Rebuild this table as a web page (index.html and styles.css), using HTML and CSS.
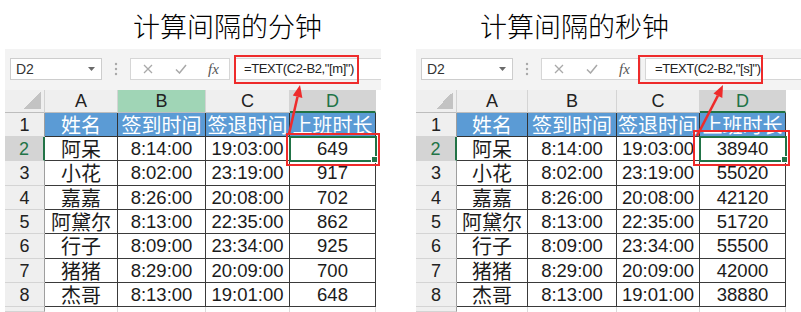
FILE: index.html
```html
<!DOCTYPE html>
<html lang="zh-CN">
<head>
<meta charset="utf-8">
<title>计算间隔</title>
<link rel="stylesheet" href="styles.css">
</head>
<body>
<div class="page">
  <section class="panel panel-m">
    <h1 class="title">计算间隔的分钟</h1>
    <div class="bar">
      <div class="namebox"><span>D2</span><svg class="caret" viewBox="0 0 7 4"><path d="M0 0H7L3.5 4Z"/></svg></div>
      <svg class="dots" viewBox="0 0 6 22"><circle cx="3" cy="6" r="1.2"/><circle cx="3" cy="11" r="1.2"/><circle cx="3" cy="16" r="1.2"/></svg>
      <div class="tools">
        <svg class="ic-x" viewBox="0 0 10 10"><path d="M1 1L9 9M9 1L1 9"/></svg>
        <svg class="ic-ok" viewBox="0 0 12 10"><path d="M1 5.5L4.5 9L11 1"/></svg>
        <span class="fx">fx</span>
      </div>
      <div class="formula">=TEXT(C2-B2,"[m]")</div>
    </div>
    <div class="grid grid-m">
      <div class="corner"></div><div class="ch">A</div><div class="ch hov">B</div><div class="ch">C</div><div class="ch on">D</div>
      <div class="rh">1</div><div class="hd">姓名</div><div class="hd">签到时间</div><div class="hd">签退时间</div><div class="hd">上班时长</div>
      <div class="rh on">2</div><div class="c n">阿呆</div><div class="c">8:14:00</div><div class="c">19:03:00</div><div class="c sel">649</div>
      <div class="rh">3</div><div class="c n">小花</div><div class="c">8:02:00</div><div class="c">23:19:00</div><div class="c">917</div>
      <div class="rh">4</div><div class="c n">嘉嘉</div><div class="c">8:26:00</div><div class="c">20:08:00</div><div class="c">702</div>
      <div class="rh">5</div><div class="c n">阿黛尔</div><div class="c">8:13:00</div><div class="c">22:35:00</div><div class="c">862</div>
      <div class="rh">6</div><div class="c n">行子</div><div class="c">8:09:00</div><div class="c">23:34:00</div><div class="c">925</div>
      <div class="rh">7</div><div class="c n">猪猪</div><div class="c">8:29:00</div><div class="c">20:09:00</div><div class="c">700</div>
      <div class="rh">8</div><div class="c n">杰哥</div><div class="c">8:13:00</div><div class="c">19:01:00</div><div class="c">648</div>
      <div class="rh"></div><div class="e"></div><div class="e"></div><div class="e"></div><div class="e"></div>
    </div>
    <svg class="marks" viewBox="0 0 376 312">
      <rect x="230" y="56" width="123" height="27"/>
      <rect x="282" y="134" width="92" height="31"/>
      <line x1="284" y1="134" x2="292.5" y2="96.7"/>
      <polygon points="295,85 297.4,98 287.8,95.6"/>
    </svg>
  </section>

  <section class="panel panel-s">
    <h1 class="title">计算间隔的秒钟</h1>
    <div class="bar">
      <div class="namebox"><span>D2</span><svg class="caret" viewBox="0 0 7 4"><path d="M0 0H7L3.5 4Z"/></svg></div>
      <svg class="dots" viewBox="0 0 6 22"><circle cx="3" cy="6" r="1.2"/><circle cx="3" cy="11" r="1.2"/><circle cx="3" cy="16" r="1.2"/></svg>
      <div class="tools">
        <svg class="ic-x" viewBox="0 0 10 10"><path d="M1 1L9 9M9 1L1 9"/></svg>
        <svg class="ic-ok" viewBox="0 0 12 10"><path d="M1 5.5L4.5 9L11 1"/></svg>
        <span class="fx">fx</span>
      </div>
      <div class="formula">=TEXT(C2-B2,"[s]")</div>
    </div>
    <div class="grid grid-s">
      <div class="corner"></div><div class="ch">A</div><div class="ch">B</div><div class="ch">C</div><div class="ch on">D</div>
      <div class="rh">1</div><div class="hd">姓名</div><div class="hd">签到时间</div><div class="hd">签退时间</div><div class="hd">上班时长</div>
      <div class="rh on">2</div><div class="c n">阿呆</div><div class="c">8:14:00</div><div class="c">19:03:00</div><div class="c sel">38940</div>
      <div class="rh">3</div><div class="c n">小花</div><div class="c">8:02:00</div><div class="c">23:19:00</div><div class="c">55020</div>
      <div class="rh">4</div><div class="c n">嘉嘉</div><div class="c">8:26:00</div><div class="c">20:08:00</div><div class="c">42120</div>
      <div class="rh">5</div><div class="c n">阿黛尔</div><div class="c">8:13:00</div><div class="c">22:35:00</div><div class="c">51720</div>
      <div class="rh">6</div><div class="c n">行子</div><div class="c">8:09:00</div><div class="c">23:34:00</div><div class="c">55500</div>
      <div class="rh">7</div><div class="c n">猪猪</div><div class="c">8:29:00</div><div class="c">20:09:00</div><div class="c">42000</div>
      <div class="rh">8</div><div class="c n">杰哥</div><div class="c">8:13:00</div><div class="c">19:01:00</div><div class="c">38880</div>
      <div class="rh"></div><div class="e"></div><div class="e"></div><div class="e"></div><div class="e"></div>
    </div>
    <svg class="marks" viewBox="0 0 385 312">
      <rect x="223" y="56" width="123" height="27"/>
      <rect x="278" y="131" width="95" height="34"/>
      <line x1="281" y1="136" x2="301.9" y2="95.7"/>
      <polygon points="307,85 306.3,98 297.5,93.5"/>
    </svg>
  </section>
</div>
</body>
</html>
```

FILE: styles.css
```css
html, body {
  margin: 0;
  padding: 0;
  background: #fff;
}
body {
  width: 801px;
  height: 312px;
  overflow: hidden;
  font-family: "Liberation Sans", Arial, sans-serif;
}
.page {
  display: flex;
  align-items: flex-start;
}
.panel {
  position: relative;
  flex: none;
}
.panel-m {
  margin-left: 5px;
  width: 376px;
}
.panel-s {
  margin-left: 35px;
  width: 385px;
}
.title {
  margin: 0;
  height: 49px;
  box-sizing: border-box;
  padding-top: 12px;
  font: 300 27px/27px "Noto Sans CJK SC", sans-serif;
  color: #000;
  white-space: nowrap;
}
.panel-m .title { padding-left: 128px; }
.panel-s .title { padding-left: 64px; }

.bar {
  display: flex;
  align-items: flex-start;
  height: 41px;
  box-sizing: border-box;
  padding: 9px 0 0 5px;
  background: #f3f3f3;
}
.namebox {
  width: 92px;
  height: 22px;
  box-sizing: border-box;
  border: 1px solid #cdcdcd;
  background: #fff;
  display: flex;
  align-items: center;
  justify-content: space-between;
  padding: 0 6px 0 5px;
  font-size: 14px;
  color: #333;
}
.caret {
  width: 7px;
  height: 4px;
  fill: #6a6a6a;
}
.dots {
  margin-left: 11px;
  width: 6px;
  height: 22px;
  fill: #a8a8a8;
}
.tools {
  margin-left: 11px;
  width: 100px;
  height: 22px;
  box-sizing: border-box;
  border: 1px solid #d6d6d6;
  background: #fff;
  display: flex;
  align-items: center;
  padding-left: 12px;
}
.ic-x {
  width: 10px;
  height: 10px;
  fill: none;
  stroke: #a9a9a9;
  stroke-width: 1.3;
}
.ic-ok {
  margin-left: 22px;
  width: 12px;
  height: 10px;
  fill: none;
  stroke: #a9a9a9;
  stroke-width: 1.5;
}
.fx {
  margin-left: 21px;
  font: italic 15px "Liberation Serif", serif;
  color: #555;
}
.formula {
  margin-left: 4px;
  flex: 1;
  height: 22px;
  box-sizing: border-box;
  border: 1px solid #d6d6d6;
  border-right: none;
  background: #fff;
  padding-left: 9px;
  font-size: 13px;
  letter-spacing: -0.4px;
  line-height: 20px;
  color: #222;
  white-space: nowrap;
}

.grid {
  display: grid;
  grid-template-rows: 23px 24px 24px 25px 24px 24px 25px 24px 24px 5px;
  background: #fff;
}
.grid-m { grid-template-columns: 40px 73px 88px 84px 86px; }
.grid-s { grid-template-columns: 41px 71px 89px 83px 86px; }
.grid > div {
  box-sizing: border-box;
  display: flex;
  align-items: center;
  justify-content: center;
  white-space: nowrap;
  line-height: 20px;
}
.corner {
  background: linear-gradient(135deg, transparent 50%, #c3c3c3 50%) right 3px bottom 3px / 17px 17px no-repeat, #efefef;
  border-right: 1px solid #d2d2d2;
  border-bottom: 1px solid #bdbdbd;
}
.ch {
  background: #efefef;
  border-right: 1px solid #d4d4d4;
  border-bottom: 1px solid #bdbdbd;
  font-size: 18px;
  color: #222;
}
.ch.hov { background: #a0d5b6; }
.ch.on {
  background: #d4d4d4;
  color: #217346;
  border-bottom: 2px solid #217346;
}
.rh {
  background: #efefef;
  border-right: 1px solid #9e9e9e;
  border-bottom: 1px solid #d4d4d4;
  font-size: 18px;
  color: #222;
}
.rh.on {
  background: #d4d4d4;
  color: #217346;
  border-right: 2px solid #217346;
}
.hd {
  background: #5b9bd5;
  color: #fff;
  font: 20px/20px "Noto Sans CJK SC", sans-serif;
  border-right: 1px solid #333;
  border-bottom: 1px solid #333;
}
.c {
  border-right: 1px solid #3a3a3a;
  border-bottom: 1px solid #3a3a3a;
  font-size: 18.5px;
  color: #1b1b1b;
}
.n {
  font-family: "Noto Sans CJK SC", sans-serif;
  font-size: 20px;
}
.sel {
  position: relative;
  outline: 2px solid #217346;
  outline-offset: -1px;
}
.sel::after {
  content: "";
  position: absolute;
  right: -3px;
  bottom: -3px;
  width: 5px;
  height: 5px;
  background: #217346;
  border: 1px solid #fff;
}
.e {
  border-right: 1px solid #dadada;
}
.marks {
  position: absolute;
  left: 0;
  top: 0;
  width: 100%;
  height: 312px;
  pointer-events: none;
  overflow: visible;
}
.marks rect {
  fill: none;
  stroke: #ee2b2b;
  stroke-width: 2;
}
.marks line {
  stroke: #ee2b2b;
  stroke-width: 2.5;
}
.marks polygon {
  fill: #ee2b2b;
}
```
